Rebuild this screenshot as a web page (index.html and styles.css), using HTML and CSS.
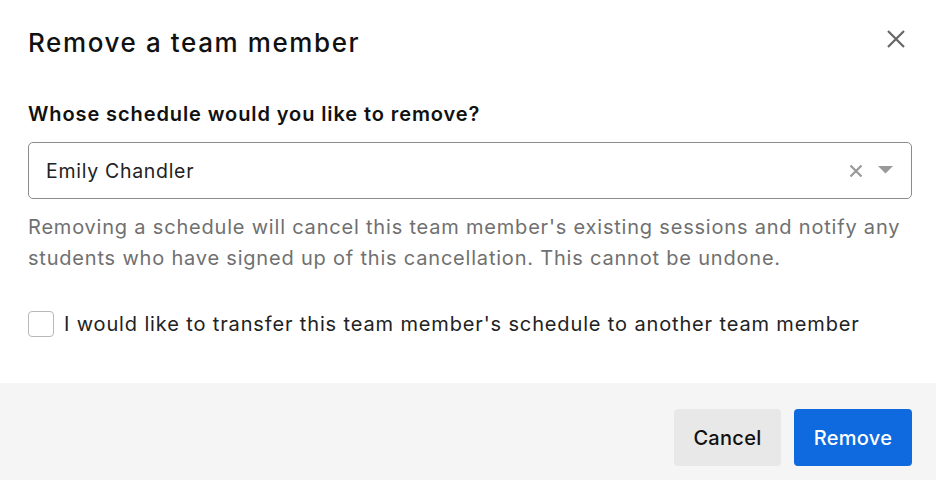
FILE: index.html
```html
<!DOCTYPE html>
<html>
<head>
<meta charset="utf-8">
<link rel="stylesheet" href="styles.css">
</head>
<body>
<div class="modal">
  <div class="body">
    <div class="header">
      <h1 class="title">Remove a team member</h1>
      <button class="close" aria-label="Close">
        <svg width="20" height="20" viewBox="0 0 20 20"><path d="M2 2 L18 18 M18 2 L2 18" stroke="#666" stroke-width="2.2" fill="none"/></svg>
      </button>
    </div>
    <label class="label">Whose schedule would you like to remove?</label>
    <div class="select">
      <span class="value">Emily Chandler</span>
      <span class="icons">
        <svg class="clear" width="14" height="14" viewBox="0 0 14 14"><path d="M1.5 1.5 L12.5 12.5 M12.5 1.5 L1.5 12.5" stroke="#999" stroke-width="2.2" fill="none"/></svg>
        <svg class="arrow" width="15" height="9" viewBox="0 0 15 9"><path d="M0 1 L15 1 L7.5 8.5 Z" fill="#999"/></svg>
      </span>
    </div>
    <p class="help">Removing a schedule will cancel this team member's existing sessions and notify any students who have signed up of this cancellation. This cannot be undone.</p>
    <label class="check">
      <span class="box"></span>
      <span class="check-text">I would like to transfer this team member's schedule to another team member</span>
    </label>
  </div>
  <div class="footer">
    <button class="btn btn-cancel">Cancel</button>
    <button class="btn btn-remove">Remove</button>
  </div>
</div>
</body>
</html>
```

FILE: styles.css
```css
* { box-sizing: border-box; }
html, body { margin: 0; padding: 0; background: #fff; }
body { font-family: Inter, "Noto Sans", sans-serif; color: #111; width: 936px; height: 480px; overflow: hidden; }
.modal { width: 936px; height: 480px; display: flex; flex-direction: column; }
.body { flex: 1; padding: 0 24px 0 28px; }
.header { display: flex; align-items: center; justify-content: space-between; height: 84px; }
.title { margin: 0; font-size: 26px; font-weight: 500; letter-spacing: 1.6px; color: #111; }
.close { background: none; border: 0; padding: 0; width: 24px; height: 24px; display: flex; align-items: center; justify-content: center; margin-right: 4px; margin-top: -6px; }
.label { display: block; margin-top: 16px; font-size: 20px; font-weight: 600; color: #111; line-height: 28px; letter-spacing: 0.9px; }
.select { margin-top: 14px; height: 57px; border: 1px solid #8c8c8c; border-radius: 5px; display: flex; align-items: center; justify-content: space-between; padding: 0 18px 0 17px; }
.value { font-size: 19.5px; color: #222; letter-spacing: 0.7px; }
.icons { display: flex; align-items: center; gap: 15px; }
.clear { margin-top: 1px; }
.arrow { margin-top: -2px; }
.help { margin: 13px 0 0 0; font-size: 20px; line-height: 31px; color: #707070; letter-spacing: 0.8px; }
.check { display: flex; align-items: center; gap: 10px; margin-top: 36px; }
.box { width: 26px; height: 26px; border: 1px solid #b8b8b8; border-radius: 4px; flex: none; }
.check-text { font-size: 20px; color: #222; line-height: 28px; letter-spacing: 0.86px; }
.footer { height: 97px; background: #f5f5f5; display: flex; align-items: flex-start; justify-content: flex-end; gap: 13px; padding: 26px 24px 0; }
.btn { height: 57px; border: 0; border-radius: 4px; font-family: Inter, "Noto Sans", sans-serif; font-size: 20px; font-weight: 500; padding: 0; letter-spacing: 0.3px; }
.btn-cancel { background: #e8e8e8; color: #111; width: 107px; }
.btn-remove { background: #0e6ade; color: #fff; width: 118px; }
```
